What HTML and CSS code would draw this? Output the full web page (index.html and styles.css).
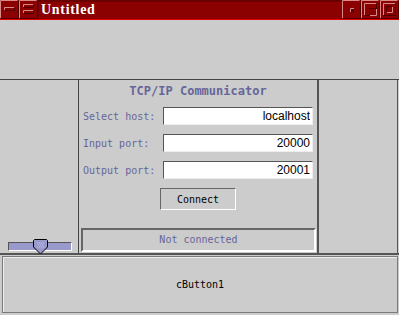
FILE: index.html
```html
<!doctype html>
<html lang="en">
 <head>
  <meta charset="UTF-8">
  <title>Untitled</title>
  <link rel="stylesheet" href="styles.css">
 </head>
 <body>
  <div class="window">
   <div class="titlebar">
    <svg class="tbtn" width="19" height="19" viewBox="0 0 19 19">
     <rect width="19" height="19" fill="#8b0000"/>
     <path d="M0.5 18V0.5H17.5" stroke="#d88a8a" fill="none"/>
     <path d="M1 18.5H18.5V1" stroke="#4c0000" fill="none"/>
     <path d="M4.5 10V7.5H14" stroke="#d88a8a" fill="none"/>
     <path d="M5 10.5H14.5V8" stroke="#4c0000" fill="none"/>
    </svg>
    <svg class="tbtn" width="19" height="19" viewBox="0 0 19 19">
     <rect width="19" height="19" fill="#8b0000"/>
     <path d="M0.5 18V0.5H17.5" stroke="#d88a8a" fill="none"/>
     <path d="M1 18.5H18.5V1" stroke="#4c0000" fill="none"/>
     <path d="M4.5 7V4.5H14" stroke="#d88a8a" fill="none"/>
     <path d="M5 7.5H14.5V5" stroke="#4c0000" fill="none"/>
     <path d="M4.5 13V10.5H14" stroke="#d88a8a" fill="none"/>
     <path d="M5 13.5H14.5V11" stroke="#4c0000" fill="none"/>
    </svg>
    <span class="title">Untitled</span>
    <svg class="tbtn" width="19" height="19" viewBox="0 0 19 19">
     <rect width="19" height="19" fill="#8b0000"/>
     <path d="M0.5 18V0.5H17.5" stroke="#d88a8a" fill="none"/>
     <path d="M1 18.5H18.5V1" stroke="#4c0000" fill="none"/>
     <rect x="8" y="8" width="4" height="4" fill="#4c0000"/>
     <path d="M8.5 12V8.5H12" stroke="#d88a8a" fill="none"/>
    </svg>
    <svg class="tbtn" width="19" height="19" viewBox="0 0 19 19">
     <rect width="19" height="19" fill="#8b0000"/>
     <path d="M0.5 18V0.5H17.5" stroke="#d88a8a" fill="none"/>
     <path d="M1 18.5H18.5V1" stroke="#4c0000" fill="none"/>
     <path d="M3.5 15V3.5H15" stroke="#d88a8a" fill="none"/>
     <path d="M4 15.5H15.5V4" stroke="#4c0000" fill="none"/>
     <path d="M8.5 15V8.5H15" stroke="#4c0000" fill="none"/>
     <path d="M9 15.5H15.5V9" stroke="#d88a8a" fill="none"/>
    </svg>
    <svg class="tbtn" width="19" height="19" viewBox="0 0 19 19">
     <rect width="19" height="19" fill="#8b0000"/>
     <path d="M0.5 18V0.5H17.5" stroke="#d88a8a" fill="none"/>
     <path d="M1 18.5H18.5V1" stroke="#4c0000" fill="none"/>
     <path d="M3.5 15V3.5H15" stroke="#d88a8a" fill="none"/>
     <path d="M4 15.5H15.5V4" stroke="#4c0000" fill="none"/>
     <path d="M6.5 12V6.5H12" stroke="#4c0000" fill="none"/>
     <path d="M7 12.5H12.5V7" stroke="#d88a8a" fill="none"/>
    </svg>
   </div>

   <div class="top-area"></div>

   <div class="main">
    <div class="left-panel">
     <div class="slider">
      <svg class="thumb" width="15" height="16" viewBox="0 0 15 16">
       <path d="M1.5 0.5H13.5L14.5 1.5V8L7.5 15L0.5 8V1.5Z" fill="#9999cc" stroke="#000"/>
       <path d="M4 4h1M6 4h1M8 4h1M10 4h1M5 6h1M7 6h1M9 6h1M4 8h1M6 8h1M8 8h1M10 8h1" stroke="#c4c4e8"/>
      </svg>
     </div>
    </div>

    <div class="center-panel">
     <h1 class="heading">TCP/IP Communicator</h1>
     <div class="field-row">
      <label for="host">Select host:</label>
      <input type="text" id="host" value="localhost">
     </div>
     <div class="field-row">
      <label for="inPort">Input port:</label>
      <input type="text" id="inPort" value="20000">
     </div>
     <div class="field-row">
      <label for="outPort">Output port:</label>
      <input type="text" id="outPort" value="20001">
     </div>
     <button class="connect">Connect</button>
     <div class="status">Not connected</div>
    </div>

    <div class="right-panel"></div>
   </div>

   <div class="bottom-area">
    <button class="big-button">cButton1</button>
   </div>
  </div>
 </body>
</html>
```

FILE: styles.css
```css
body {
  margin: 0;
  background-color: #cccccc;
  font-family: "DejaVu Sans Mono", monospace;
}
.window {
  width: 399px;
  height: 315px;
  overflow: hidden;
  background-color: #cccccc;
}
.titlebar {
  display: flex;
  height: 19px;
  background-color: #8b0000;
  border-bottom: 1px solid #e00000;
}
.tbtn {
  display: block;
  flex: none;
}
.title {
  flex: 1;
  padding-left: 3px;
  color: #fff;
  font-family: "Liberation Serif", serif;
  font-weight: bold;
  font-size: 14px;
  letter-spacing: 0.7px;
  line-height: 19px;
  box-shadow: inset 1px 2px #6a0000;
}
.top-area {
  height: 59px;
  border-bottom: 1px solid #444;
}
.main {
  display: flex;
  height: 173px;
  border-bottom: 2px solid #555;
}
.left-panel {
  width: 79px;
  border-right: 1px solid #444;
  display: flex;
  flex-direction: column;
  justify-content: flex-end;
  padding-bottom: 2px;
  box-sizing: border-box;
}
.slider {
  position: relative;
  margin-left: 8px;
  width: 62px;
  height: 7px;
  background-color: #9999cc;
  border: 1px solid;
  border-color: #555 #fff #fff #555;
}
.thumb {
  position: absolute;
  left: 24px;
  top: -4px;
}
.center-panel {
  width: 238px;
  padding: 0 4px;
  box-sizing: border-box;
  display: flex;
  flex-direction: column;
}
.heading {
  margin: 4px 0 0;
  font-size: 12px;
  line-height: 14px;
  text-align: center;
  color: #666699;
}
.field-row {
  display: flex;
  align-items: center;
  margin-top: 9px;
}
.field-row label {
  width: 80px;
  font-size: 10px;
  color: #666699;
}
.field-row input {
  width: 150px;
  height: 18px;
  box-sizing: border-box;
  margin: 0;
  padding: 0 2px;
  border: 1px solid;
  border-color: #555 #eee #eee #555;
  background-color: #fff;
  font-family: "Liberation Sans", sans-serif;
  font-size: 12px;
  text-align: right;
  color: #000;
}
.connect {
  align-self: center;
  margin-top: 9px;
  width: 76px;
  height: 22px;
  padding: 0;
  background-color: #cccccc;
  border: 1px solid;
  border-color: #666 #fff #fff #666;
  font-family: "DejaVu Sans Mono", monospace;
  font-size: 10px;
  color: #000;
}
.status {
  margin: 18px -3px 0 -2px;
  height: 24px;
  box-sizing: border-box;
  border: 2px solid;
  border-color: #666 #fff #fff #666;
  font-size: 10px;
  line-height: 20px;
  text-align: center;
  color: #666699;
}
.right-panel {
  flex: 1;
  border-left: 2px solid #555;
  border-right: 1px solid #555;
  margin-right: 1px;
}
.bottom-area {
  padding: 1px 1px 2px 2px;
  height: 60px;
  box-sizing: border-box;
  display: flex;
}
.big-button {
  flex: 1;
  background-color: #cccccc;
  border: 1px solid #7a7a7a;
  box-shadow: inset 1px 1px #eee;
  font-family: "DejaVu Sans Mono", monospace;
  font-size: 10px;
  color: #000;
}
```
